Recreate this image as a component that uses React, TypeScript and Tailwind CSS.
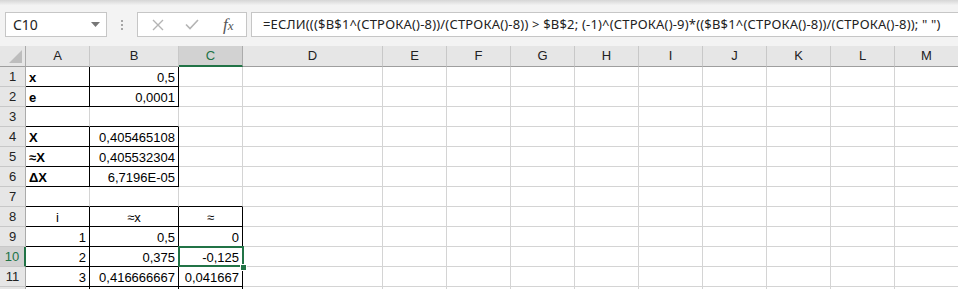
import React from 'react';

type Cell = { t?: string; a?: 'l' | 'r' | 'c'; b?: boolean; box?: boolean };

const COLS = ['A', 'B', 'C', 'D', 'E', 'F', 'G', 'H', 'I', 'J', 'K', 'L', 'M'];

const FORMULA =
  '=ЕСЛИ((($B$1^(СТРОКА()-8))/(СТРОКА()-8)) > $B$2; (-1)^(СТРОКА()-9)*(($B$1^(СТРОКА()-8))/(СТРОКА()-8)); " ")';

// rows 1..12, only the first three columns hold anything
const DATA: Cell[][] = [
  [{ t: 'x', a: 'l', b: true, box: true }, { t: '0,5', a: 'r', box: true }],
  [{ t: 'e', a: 'l', b: true, box: true }, { t: '0,0001', a: 'r', box: true }],
  [],
  [{ t: 'X', a: 'l', b: true, box: true }, { t: '0,405465108', a: 'r', box: true }],
  [{ t: '≈X', a: 'l', b: true, box: true }, { t: '0,405532304', a: 'r', box: true }],
  [{ t: 'ΔX', a: 'l', b: true, box: true }, { t: '6,7196E-05', a: 'r', box: true }],
  [],
  [{ t: 'i', a: 'c', box: true }, { t: '≈x', a: 'c', box: true }, { t: '≈', a: 'c', box: true }],
  [{ t: '1', a: 'r', box: true }, { t: '0,5', a: 'r', box: true }, { t: '0', a: 'r', box: true }],
  [{ t: '2', a: 'r', box: true }, { t: '0,375', a: 'r', box: true }, { t: '-0,125', a: 'r', box: true }],
  [{ t: '3', a: 'r', box: true }, { t: '0,416666667', a: 'r', box: true }, { t: '0,041667', a: 'r', box: true }],
  [{ box: true }, { box: true }, { box: true }],
];

const boxed = (r: number, c: number) => !!DATA[r]?.[c]?.box;

function CellView({ r, c }: { r: number; c: number }) {
  const cell = DATA[r]?.[c] ?? {};
  const right = boxed(r, c) || boxed(r, c + 1) ? 'border-r-black' : 'border-r-[#d4d4d4]';
  const bottom = boxed(r, c) || boxed(r + 1, c) ? 'border-b-black' : 'border-b-[#d4d4d4]';
  const align =
    cell.a === 'r' ? 'justify-end pr-[3px]' : cell.a === 'c' ? 'justify-center' : 'justify-start pl-[3px]';
  return (
    <div
      className={`flex h-[20px] items-center overflow-hidden whitespace-nowrap border-r border-b bg-white pt-[2px] text-[13px] text-black ${right} ${bottom} ${align} ${
        cell.b ? 'font-bold' : ''
      }`}
    >
      {cell.t}
    </div>
  );
}

export default function App() {
  return (
    <div className="h-[289px] w-[958px] overflow-hidden bg-[#f3f3f3] font-['Liberation_Sans',sans-serif]">
      <div className="h-[5px] bg-gradient-to-b from-[#d6d6d6] to-[#f1f1f1]" />

      {/* name box + formula bar */}
      <div className="mt-[7px] flex h-[25px] items-stretch font-['Noto_Sans',sans-serif]">
        <div className="ml-[5px] flex w-[102px] shrink-0 items-center justify-between border border-[#c6c6c6] bg-white pl-[7px] pr-[6px] text-[14px] text-[#222]">
          <span>C10</span>
          <svg width="9" height="5" viewBox="0 0 9 5">
            <polygon points="0,0 9,0 4.5,5" fill="#777" />
          </svg>
        </div>
        <div className="flex w-[30px] shrink-0 flex-col items-center justify-center gap-[2px]">
          <span className="h-[2px] w-[2px] bg-[#a6a6a6]" />
          <span className="h-[2px] w-[2px] bg-[#a6a6a6]" />
          <span className="h-[2px] w-[2px] bg-[#a6a6a6]" />
        </div>
        <div className="flex w-[110px] shrink-0 items-center border border-[#c6c6c6] bg-white">
          <svg className="ml-[14px]" width="12" height="12" viewBox="0 0 12 12">
            <path d="M1 1 L11 11 M11 1 L1 11" stroke="#b4b4b4" strokeWidth="1.4" fill="none" />
          </svg>
          <svg className="ml-[21px]" width="14" height="11" viewBox="0 0 14 11">
            <path d="M1 5.5 L5 9.5 L13 1" stroke="#b4b4b4" strokeWidth="1.6" fill="none" />
          </svg>
          <span className="ml-[24px] font-['Liberation_Serif',serif] text-[17px] italic leading-none text-[#555]">
            f<span className="text-[13px]">x</span>
          </span>
        </div>
        <div className="ml-[4px] flex min-w-0 flex-1 items-center overflow-hidden border border-r-0 border-[#c6c6c6] bg-white pl-[11px] text-[13px] tracking-[0.18px] whitespace-nowrap text-[#222]">
          {FORMULA}
        </div>
      </div>

      {/* sheet */}
      <div className="relative mt-[9px] grid grid-cols-[26px_64px_89px_64px_140px_repeat(9,64px)]">
        {/* header row */}
        <div className="relative h-[21px] border-r border-b border-r-[#ababab] border-b-[#9e9e9e] bg-[#e6e6e6]">
          <svg className="absolute right-[3px] bottom-[3px]" width="13" height="13" viewBox="0 0 13 13">
            <polygon points="13,0 13,13 0,13" fill="#bdbdbd" />
          </svg>
        </div>
        {COLS.map((l) => (
          <div
            key={l}
            className={`flex h-[21px] items-center justify-center text-[13px] ${
              l === 'C'
                ? 'border-r border-b-2 border-r-[#ababab] border-b-[#217346] bg-[#d2d2d2] text-[#217346]'
                : 'border-r border-b border-r-[#c8c8c8] border-b-[#9e9e9e] bg-[#e6e6e6] text-[#222]'
            }`}
          >
            {l}
          </div>
        ))}

        {DATA.map((_, r) => (
          <React.Fragment key={r}>
            <div
              className={`flex h-[20px] items-center justify-center pt-[1px] text-[13px] ${
                r === 9
                  ? 'border-r-2 border-b border-r-[#217346] border-b-[#c8c8c8] bg-[#d2d2d2] text-[#217346]'
                  : 'border-r border-b border-r-[#ababab] border-b-[#c8c8c8] bg-[#e6e6e6] text-[#222]'
              }`}
            >
              {r < 11 ? r + 1 : ''}
            </div>
            {COLS.map((_, c) => (
              <CellView key={c} r={r} c={c} />
            ))}
          </React.Fragment>
        ))}

        {/* active cell C10 */}
        <div className="absolute top-[200px] left-[178px] h-[21px] w-[66px] border-2 border-[#217346]" />
        <div className="absolute top-[218px] left-[240px] h-[7px] w-[7px] border border-white bg-[#217346]" />
      </div>
    </div>
  );
}
